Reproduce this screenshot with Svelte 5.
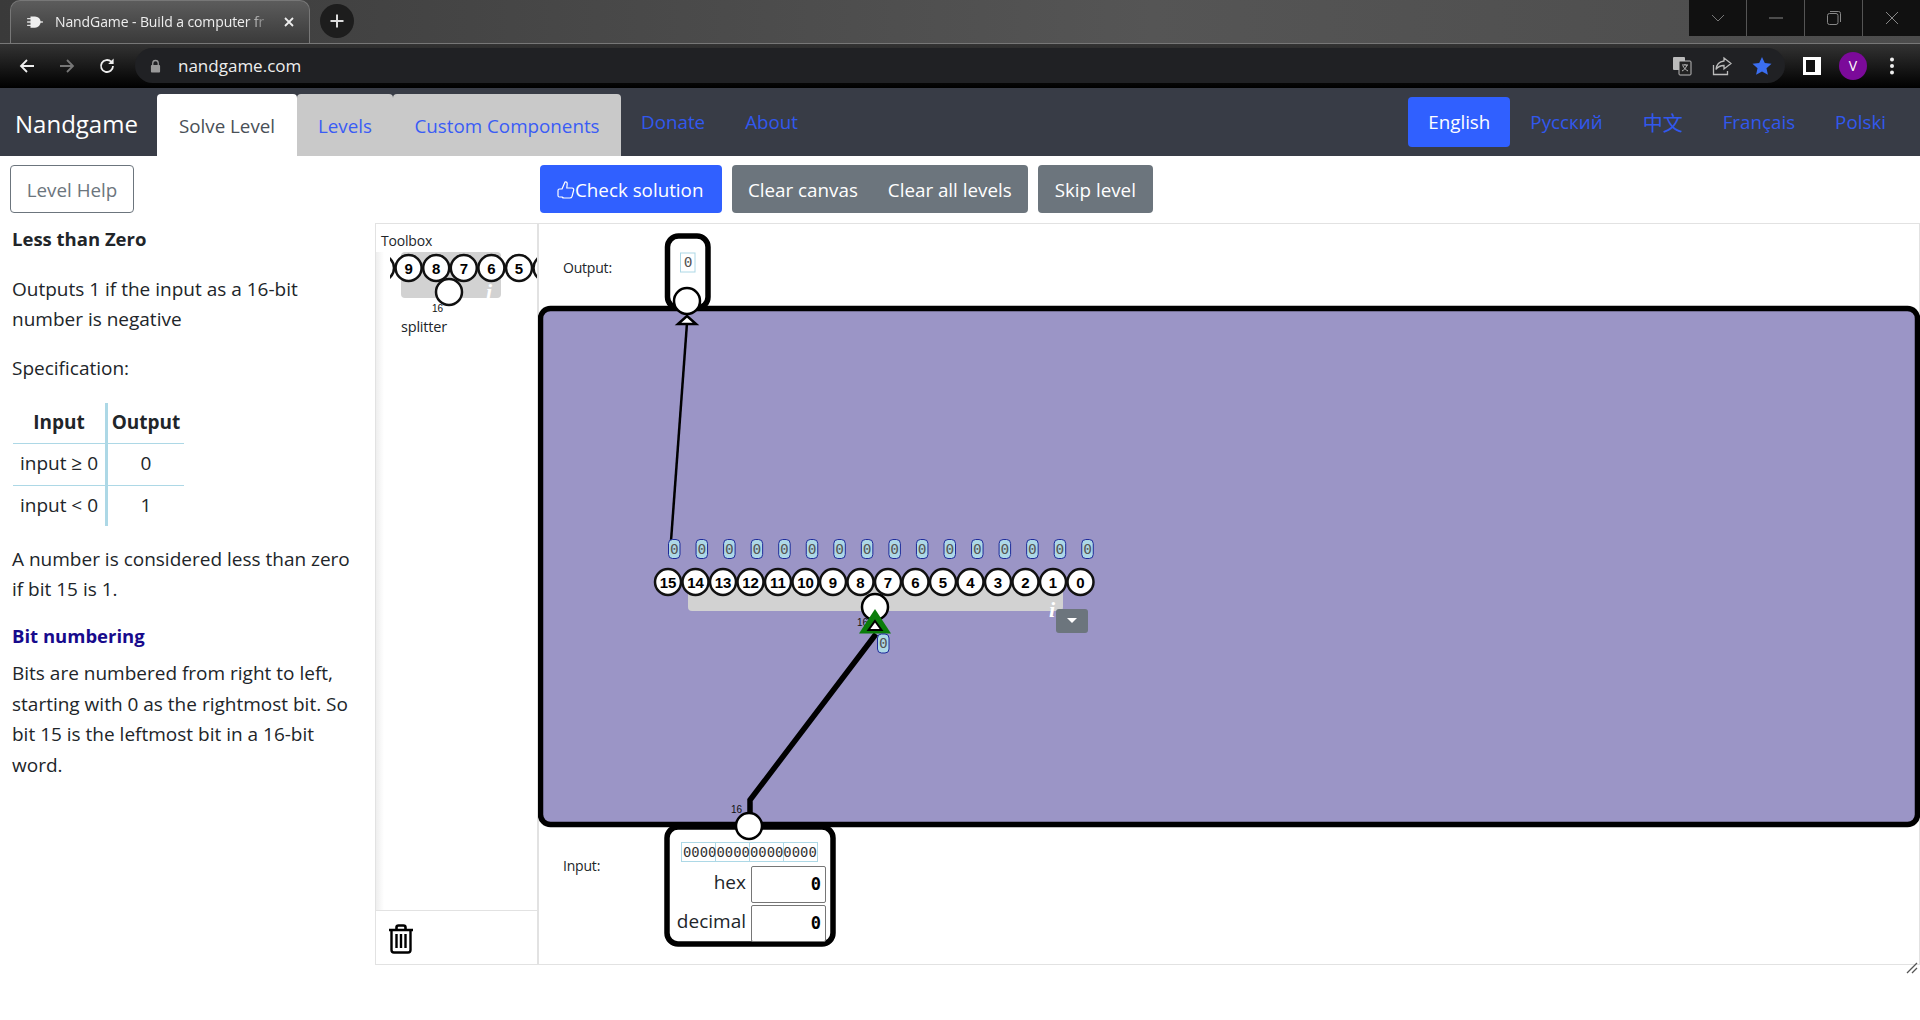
<script>
	const pins = Array.from({ length: 16 }, (_, i) => 15 - i);
	const pinX = (bit) => 668 + (15 - bit) * 27.5 - 538;
	// only the middle pins of the toolbox preview are readable, the outer two are clipped
	const toolboxPins = [9, 8, 7, 6, 5];
	const langs = ['Русский', '中文', 'Français', 'Polski'];
</script>

<div class="page">
	<div class="tabstrip">
		<div class="tab">
			<svg class="favicon" viewBox="0 0 16 16" width="18" height="18">
				<path d="M1 5h4M1 8h4M1 11h4M11 8h4" stroke="#ddd" stroke-width="1.2" />
				<path d="M4 3h4a5 5 0 0 1 0 10H4z" fill="#eee" />
			</svg>
			<span class="tab-title">NandGame - Build a computer fr</span>
			<svg class="tab-x" viewBox="0 0 12 12" width="12" height="12">
				<path d="M2 2l8 8M10 2l-8 8" stroke="#eee" stroke-width="1.8" />
			</svg>
		</div>
		<div class="newtab">
			<svg viewBox="0 0 16 16" width="16" height="16">
				<path d="M8 1.500v13M1.500 8h13" stroke="#ddd" stroke-width="2" />
			</svg>
		</div>
		<div class="winctl">
			<div class="ctl">
				<svg viewBox="0 0 14 8" width="14" height="8"><path d="M1 1l6 6 6-6" fill="none" stroke="#777" /></svg>
			</div>
			<div class="ctl">
				<svg viewBox="0 0 14 2" width="14" height="2"><path d="M0 1h14" stroke="#888" /></svg>
			</div>
			<div class="ctl">
				<svg viewBox="0 0 14 14" width="14" height="14">
					<rect x="0.5" y="2.5" width="10.5" height="11" rx="2" fill="none" stroke="#888" />
					<path d="M3 .5h8.500a2 2 0 0 1 2 2V11" fill="none" stroke="#888" />
				</svg>
			</div>
			<div class="ctl last">
				<svg viewBox="0 0 14 14" width="14" height="14"><path d="M1 1l12 12M13 1L1 13" stroke="#888" /></svg>
			</div>
		</div>
	</div>

	<div class="toolbar">
		<svg class="tb-icon" viewBox="0 0 18 18" width="18" height="18">
			<path d="M16 9H3M9 3L3 9l6 6" fill="none" stroke="#eee" stroke-width="1.8" />
		</svg>
		<svg class="tb-icon" viewBox="0 0 18 18" width="18" height="18">
			<path d="M2 9h13M9 3l6 6-6 6" fill="none" stroke="#777" stroke-width="1.8" />
		</svg>
		<svg class="tb-icon" viewBox="0 0 18 18" width="18" height="18">
			<path d="M15 9a6 6 0 1 1-1.800-4.300" fill="none" stroke="#eee" stroke-width="1.8" />
			<path d="M15.600 1.600v5.400h-5.400z" fill="#eee" />
		</svg>
		<div class="omnibox">
			<svg viewBox="0 0 12 14" width="11" height="14">
				<path d="M3 6V4a3 3 0 0 1 6 0v2" fill="none" stroke="#9a9a9a" stroke-width="1.4" />
				<rect x="1" y="6" width="10" height="8" rx="1" fill="#9a9a9a" />
			</svg>
			<span class="url">nandgame.com</span>
			<div class="omni-icons">
				<svg viewBox="0 0 20 20" width="20" height="20">
					<rect x="1" y="1" width="12" height="13" rx="1" fill="#bbb" />
					<rect x="7" y="5" width="12" height="14" rx="1" fill="#222" stroke="#bbb" />
					<path d="M10 9h6M13 8v1M15 9c-1 3-3 5-5 6M11 10c1 2 3 4 5 5" fill="none" stroke="#bbb" />
				</svg>
				<svg viewBox="0 0 20 20" width="20" height="20">
					<path d="M1.500 9v9.500h14V15" fill="none" stroke="#bbb" stroke-width="1.3" />
					<path d="M12 2l7 5.500-7 5.500V9.500c-4 0-6 1-8 4 .5-5 3.500-8 8-8.500z" fill="none" stroke="#bbb" stroke-width="1.3" />
				</svg>
				<svg viewBox="0 0 20 20" width="20" height="20">
					<path d="M10 1l2.800 6 6.700.7-5 4.500 1.400 6.600L10 15.500l-5.900 3.300 1.400-6.600-5-4.500L7.200 7z" fill="#3b6ef0" />
				</svg>
			</div>
		</div>
		<div class="tb-right">
			<svg viewBox="0 0 18 18" width="18" height="18">
				<rect x="0" y="0" width="18" height="18" fill="#fff" />
				<rect x="3" y="3" width="9" height="12" fill="#111" />
			</svg>
			<div class="avatar">V</div>
			<svg class="dots" viewBox="0 0 4 18" width="4" height="18">
				<circle cx="2" cy="2.500" r="2" fill="#eee" />
				<circle cx="2" cy="9" r="2" fill="#eee" />
				<circle cx="2" cy="15.500" r="2" fill="#eee" />
			</svg>
		</div>
	</div>

	<nav class="navbar">
		<span class="brand">Nandgame</span>
		<div class="navtabs">
			<span class="navtab active">Solve Level</span>
			<a class="navtab levels" href="#levels">Levels</a>
			<a class="navtab custom" href="#custom">Custom Components</a>
		</div>
		<a class="navlink donate" href="#donate">Donate</a>
		<a class="navlink" href="#about">About</a>
		<div class="languages">
			<span class="lang current">English</span>
			{#each langs as l}
				<a class="lang" class:cjk={l === '中文'} href="#lang">{l}</a>
			{/each}
		</div>
	</nav>

	<div class="actions">
		<button class="btn outline">Level Help</button>
		<div class="action-group">
			<button class="btn primary">
				<svg viewBox="0 0 18 20" width="18" height="20">
					<path d="M5 9l3-7c1.500-.5 2.300.5 2.200 2L9.800 8H15c1.500 0 2 1.200 1.600 2.500l-1.600 6c-.4 1-1 1.500-2 1.500H7c-1 0-1.500-.4-2-1H2.500C1.500 17 1 16.500 1 15.500v-5C1 9.500 1.500 9 2.500 9z" fill="none" stroke="#fff" stroke-width="1.200" />
				</svg>Check solution
			</button>
			<div class="btn-pair">
				<button class="btn secondary">Clear canvas</button>
				<button class="btn secondary">Clear all levels</button>
			</div>
			<button class="btn secondary">Skip level</button>
		</div>
	</div>

	<div class="workspace">
		<aside class="help">
			<h4>Less than Zero</h4>
			<p>Outputs 1 if the input as a 16-bit<br />number is negative</p>
			<p>Specification:</p>
			<table>
				<thead>
					<tr><th>Input</th><th>Output</th></tr>
				</thead>
				<tbody>
					<tr><td>input ≥ 0</td><td>0</td></tr>
					<tr><td>input &lt; 0</td><td>1</td></tr>
				</tbody>
			</table>
			<p>A number is considered less than zero<br />if bit 15 is 1.</p>
			<h5>Bit numbering</h5>
			<p>Bits are numbered from right to left,<br />starting with 0 as the rightmost bit. So<br />bit 15 is the leftmost bit in a 16-bit<br />word.</p>
		</aside>

		<section class="toolbox">
			<div class="toolbox-title">Toolbox</div>
			<div class="palette">
				<svg class="palette-svg" width="161" height="110" viewBox="0 0 161 110">
					<defs>
						<clipPath id="palette-clip"><rect x="14" y="0" width="147" height="110" /></clipPath>
					</defs>
					<g clip-path="url(#palette-clip)">
						<rect x="25" y="0" width="100" height="46" rx="4" fill="#d2d2d2" />
						<circle cx="5" cy="16" r="13" fill="#fff" stroke="#111" stroke-width="2.500" />
						<circle cx="170.500" cy="16" r="13" fill="#fff" stroke="#111" stroke-width="2.500" />
						{#each toolboxPins as p, i}
							<circle cx={32.600 + i * 27.6} cy="16" r="13" fill="#fff" stroke="#111" stroke-width="2.500" />
							<text class="pin-label" x={32.600 + i * 27.6} y="21.500">{p}</text>
						{/each}
						<text class="info" x="110" y="47">i</text>
						<circle cx="73" cy="40" r="13" fill="#fff" stroke="#111" stroke-width="2.500" />
						<text class="tiny" x="56" y="60">16</text>
					</g>
				</svg>
				<div class="palette-name">splitter</div>
			</div>
			<div class="trash">
				<svg viewBox="0 0 26 30" width="26" height="30">
					<path d="M1 6h24M8.500 5V3.500c0-1.200.8-2 2-2h5c1.200 0 2 .8 2 2V5" fill="none" stroke="#000" stroke-width="2.600" />
					<path d="M3.500 7v19c0 1.500 1 2.500 2.500 2.500h14c1.500 0 2.500-1 2.500-2.500V7" fill="none" stroke="#000" stroke-width="2.400" />
					<path d="M8.500 10v14M13 10v14M17.500 10v14" stroke="#000" stroke-width="2.400" />
				</svg>
			</div>
		</section>

		<section class="canvas">
			<svg class="diagram" width="1382" height="741" viewBox="0 0 1382 741">
				<!-- node coordinates are relative to the canvas corner (538, 223) -->
				<text class="port-label" x="25" y="49.500">Output:</text>
				<rect x="129.500" y="13" width="40.500" height="72" rx="11" fill="#fff" stroke="#000" stroke-width="5.500" />
				<rect x="142.500" y="30" width="14.500" height="19" fill="#fff" stroke="#add8e6" />
				<text class="bit" x="150" y="44">0</text>

				<rect x="2.500" y="85.500" width="1377" height="516" rx="10" fill="#9b95c6" stroke="#000" stroke-width="5.500" />

				<text class="port-label" x="25" y="648">Input:</text>
				<rect x="129" y="604" width="166" height="117" rx="11" fill="#fff" stroke="#000" stroke-width="5.500" />

				<!-- wires -->
				<path d="M149 100L133 318" stroke="#000" stroke-width="2.500" />
				<path d="M338 411L212 577V595" fill="none" stroke="#000" stroke-width="5.500" />

				<!-- output pin -->
				<circle cx="149" cy="78" r="13" fill="#fff" stroke="#000" stroke-width="2.500" />
				<path d="M149 93l9 8h-18z" fill="#fff" stroke="#000" stroke-width="2.500" />

				<!-- splitter -->
				<rect x="150" y="360" width="375" height="28" rx="4" fill="#d2d2d2" />
				{#each pins as p, i}
					<rect class="bitcell" x={136 + i * 27.55 - 5.500} y="316.500" width="11.500" height="19" rx="4" />
					<text class="bit" x={136.250 + i * 27.55} y="331">0</text>
				{/each}
				{#each pins as p}
					<circle cx={pinX(p)} cy="359" r="13" fill="#fff" stroke="#111" stroke-width="2.500" />
					<text class="pin-label" x={pinX(p)} y="364.500">{p}</text>
				{/each}
				<text class="info" x="511" y="394">i</text>
				<circle cx="337" cy="384" r="13" fill="#fff" stroke="#000" stroke-width="2.500" />
				<text class="tiny" x="319" y="403">16</text>
				<path d="M337 386l16 24.500h-32z" fill="#0b7d0b" />
				<path d="M337 398l6.500 9h-13z" fill="#fff" stroke="#000" stroke-width="2" />
				<rect class="bitcell" x="339.500" y="411" width="11.500" height="19" rx="4" />
				<text class="bit" x="345.250" y="425">0</text>

				<rect x="518" y="386" width="32" height="24" rx="3" fill="#6c757d" />
				<path d="M529 395h10l-5 5z" fill="#fff" />

				<!-- input node -->
				<circle cx="211" cy="603" r="13" fill="#fff" stroke="#000" stroke-width="2.500" />
				<text class="tiny" x="193" y="590">16</text>
				<rect x="143.500" y="619.500" width="136" height="19" fill="#fff" stroke="#add8e6" />
				<path d="M177.500 620v18M211.500 620v18M245.500 620v18" stroke="#add8e6" />
				<text class="bit wide" x="145" y="633.500">0000000000000000</text>

				<text class="field-label" x="208" y="666">hex</text>
				<rect x="213.500" y="643.500" width="74" height="36" rx="1.500" fill="#fff" stroke="#767676" />
				<text class="field-value" x="283" y="667">0</text>
				<text class="field-label" x="208" y="705">decimal</text>
				<rect x="213.500" y="682.500" width="74" height="36" rx="1.500" fill="#fff" stroke="#767676" />
				<text class="field-value" x="283" y="706">0</text>
			</svg>
			<svg class="grip" width="12" height="12" viewBox="0 0 12 12">
				<path d="M1 11L11 1M6 11l5-5" stroke="#555" stroke-width="1.300" />
			</svg>
		</section>
	</div>
</div>

<style>
	:global(body) {
		margin: 0;
		background: #fff;
		overflow: hidden;
	}
	.page {
		width: 1920px;
		height: 1020px;
		font-family: 'Open Sans', 'Noto Sans CJK SC', sans-serif;
		font-size: 19px;
		color: #212529;
		overflow: hidden;
	}

	/* browser chrome */
	.tabstrip {
		height: 44px;
		display: flex;
		align-items: flex-start;
		background: linear-gradient(90deg, #3a3a3a, #555 60%, #4c4c4c);
		box-sizing: border-box;
		border-bottom: 1px solid #777;
	}
	.tab {
		width: 300px;
		height: 43px;
		margin-left: 10px;
		padding: 0 14px 0 15px;
		box-sizing: border-box;
		display: flex;
		align-items: center;
		gap: 11px;
		background: linear-gradient(#5c5c5c, #3a3a3a);
		border: 1px solid #777;
		border-bottom: none;
		border-radius: 10px 10px 0 0;
		color: #eee;
		font-size: 14px;
	}
	.tab-title {
		flex: 1;
		white-space: nowrap;
		letter-spacing: -0.1px;
		padding-bottom: 2px;
		mask-image: linear-gradient(90deg, #000 88%, transparent 100%);
	}
	.favicon,
	.tab-x {
		flex: none;
	}
	.newtab {
		width: 34px;
		height: 34px;
		margin: 4px 0 0 10px;
		background: #1d1d1d;
		border-radius: 17px;
		display: flex;
		align-items: center;
		justify-content: center;
	}
	.winctl {
		margin-left: auto;
		height: 36px;
		display: flex;
		background: #111;
	}
	.ctl {
		width: 57px;
		display: flex;
		align-items: center;
		justify-content: center;
		border-right: 1px solid #555;
	}
	.ctl.last {
		border-right: none;
	}
	.toolbar {
		height: 44px;
		display: flex;
		align-items: center;
		background: linear-gradient(#333, #000);
		padding: 0 0 1px 18px;
		box-sizing: border-box;
	}
	.tb-icon {
		margin-right: 22px;
		flex: none;
	}
	.omnibox {
		width: 1650px;
		flex: none;
		height: 35px;
		display: flex;
		align-items: center;
		gap: 17px;
		padding: 0 13px 0 15px;
		box-sizing: border-box;
		background: #202124;
		border-radius: 18px;
		margin-left: -3px;
	}
	.url {
		color: #eee;
		font-size: 17px;
	}
	.omni-icons {
		margin-left: auto;
		display: flex;
		gap: 20px;
	}
	.tb-right {
		flex: 1;
		display: flex;
		align-items: center;
		padding-left: 18px;
	}
	.avatar {
		width: 28px;
		height: 28px;
		margin-left: 18px;
		border-radius: 50%;
		background: #7b0a9a;
		color: #fff;
		font-size: 14px;
		display: flex;
		align-items: center;
		justify-content: center;
	}
	.dots {
		margin-left: 23px;
	}

	/* nav */
	.navbar {
		height: 68px;
		background: #383c46;
		display: flex;
		align-items: flex-end;
	}
	.brand {
		width: 157px;
		align-self: center;
		box-sizing: border-box;
		padding: 3px 0 0 15px;
		color: #fff;
		font-size: 24px;
		line-height: 32px;
	}
	.navtabs {
		display: flex;
		height: 62px;
	}
	.navtab {
		display: flex;
		align-items: center;
		justify-content: center;
		padding-top: 1px;
		box-sizing: border-box;
		background: #c9c9c9;
		color: #3a5cf5;
		text-decoration: none;
		border-radius: 4px 4px 0 0;
		font-size: 18.800px;
	}
	.navtab.active {
		width: 140px;
		background: #fff;
		color: #495057;
	}
	.navtab.levels {
		width: 96px;
	}
	.navtab.custom {
		width: 228px;
	}
	.navlink {
		align-self: center;
		color: #3158ee;
		text-decoration: none;
		font-size: 18.800px;
		margin-left: 40px;
	}
	.navlink.donate {
		margin-left: 20px;
	}
	.languages {
		margin-left: auto;
		margin-right: 14px;
		align-self: center;
		display: flex;
		align-items: center;
	}
	.lang {
		height: 50px;
		padding: 0 20px;
		display: flex;
		align-items: center;
		color: #3158ee;
		text-decoration: none;
		font-size: 18.800px;
		border-radius: 4px;
	}
	.lang.cjk {
		font-size: 20px;
	}
	.lang.current {
		background: #3060ff;
		color: #fff;
	}

	/* action buttons */
	.actions {
		height: 67px;
		padding: 9px 0 0 10px;
		box-sizing: border-box;
		display: flex;
		align-items: flex-start;
	}
	.btn {
		height: 48px;
		padding: 2px 16px 0;
		font: inherit;
		font-size: 18.800px;
		border: 1px solid transparent;
		border-radius: 4px;
		display: inline-flex;
		align-items: center;
		white-space: nowrap;
	}
	.btn.outline {
		width: 124px;
		background: #fff;
		border-color: #6c757d;
		color: #6c757d;
		justify-content: center;
		padding: 2px 0 0;
	}
	.btn.primary {
		width: 182px;
		background: #3060ff;
		color: #fff;
		padding: 2px 0 0 16px;
	}
	.btn.secondary {
		background: #6c757d;
		color: #fff;
	}
	.action-group {
		margin-left: 406px;
		display: flex;
		gap: 10px;
	}
	.btn-pair {
		display: flex;
	}
	.btn-pair .btn:first-child {
		border-radius: 4px 0 0 4px;
		padding: 2px 14px 0 15px;
	}
	.btn-pair .btn:last-child {
		border-radius: 0 4px 4px 0;
		padding: 2px 15px 0 14px;
	}

	/* workspace */
	.workspace {
		display: flex;
		height: 742px;
	}
	.help {
		width: 375px;
		flex: none;
		box-sizing: border-box;
		padding: 0 12px;
		line-height: 30.400px;
		font-size: 19px;
	}
	.help h4 {
		margin: 1px 0 19px;
		font-size: 18.500px;
		font-weight: 700;
		line-height: 30.600px;
	}
	.help h5 {
		margin: -3px 0 7px;
		font-size: 18.500px;
		font-weight: 700;
		line-height: 30.600px;
		color: #170a8c;
	}
	.help p {
		margin: 0 0 19px;
	}
	.help table {
		border-collapse: collapse;
		table-layout: fixed;
		width: 171px;
		margin: 1px 0 18px 1px;
		line-height: 29.400px;
	}
	.help th,
	.help td {
		text-align: center;
		padding: 5px 0 6px;
		border-bottom: 1px solid #add8e6;
		white-space: nowrap;
	}
	.help tr:last-child td {
		border-bottom: none;
	}
	.help th:first-child,
	.help td:first-child {
		border-right: 3px solid #add8e6;
		width: 92px;
	}
	.toolbox {
		width: 163px;
		flex: none;
		box-sizing: border-box;
		border: 1px solid #e2e2e2;
		display: flex;
		flex-direction: column;
	}
	.toolbox-title {
		height: 28px;
		padding: 8px 5px 0;
		box-sizing: border-box;
		font-size: 14px;
		line-height: 18px;
		letter-spacing: -0.2px;
	}
	.palette {
		flex: 1;
		background: linear-gradient(90deg, #eee, #fff 8px);
	}
	.palette-svg {
		display: block;
	}
	.palette-name {
		margin: -45px 0 0 25px;
		font-size: 14.500px;
		letter-spacing: -0.2px;
		line-height: 20px;
	}
	.trash {
		height: 54px;
		box-sizing: border-box;
		border-top: 1px solid #e2e2e2;
		padding: 13px 0 0 12px;
	}
	.canvas {
		flex: 1;
		position: relative;
		box-sizing: border-box;
		border: 1px solid #e2e2e2;
		margin-left: -0.5px;
	}
	.diagram {
		display: block;
		position: absolute;
		left: -1px;
		top: -1px;
	}
	.grip {
		position: absolute;
		right: 1px;
		bottom: -10px;
	}
	.pin-label {
		font-family: 'Liberation Sans', sans-serif;
		font-size: 15px;
		font-weight: 700;
		text-anchor: middle;
		fill: #000;
	}
	.tiny {
		font-family: 'Liberation Sans', sans-serif;
		font-size: 10px;
		fill: #111;
	}
	.info {
		font-family: 'Liberation Serif', serif;
		font-size: 22px;
		font-style: italic;
		font-weight: 700;
		fill: #fff;
	}
	.bit {
		font-family: 'DejaVu Sans Mono', monospace;
		font-size: 14.500px;
		text-anchor: middle;
		fill: #555;
	}
	.bit.wide {
		text-anchor: start;
		font-size: 13.900px;
		fill: #333;
	}
	.bitcell {
		fill: #add8e6;
		stroke: #1d2a9a;
		stroke-width: 1;
	}
	.port-label {
		font-size: 14px;
		letter-spacing: -0.2px;
		fill: #212529;
	}
	.field-label {
		font-size: 19px;
		text-anchor: end;
		fill: #212529;
	}
	.field-value {
		font-family: 'DejaVu Sans Mono', monospace;
		font-size: 17px;
		font-weight: 700;
		text-anchor: end;
		fill: #000;
	}
</style>
